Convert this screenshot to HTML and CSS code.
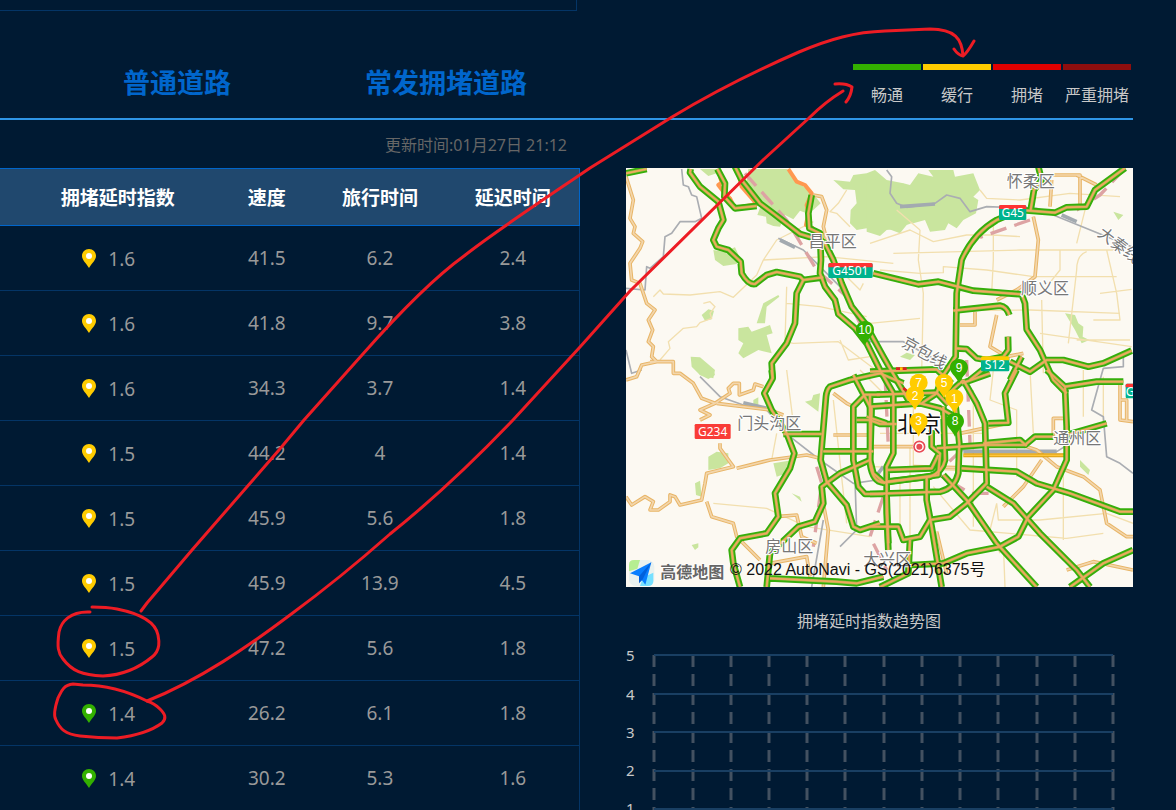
FILE: index.html
```
<!DOCTYPE html>
<html lang="zh-CN">
<head>
<meta charset="utf-8">
<title>北京交通拥堵指数</title>
<link rel="stylesheet" href="styles.css">
</head>
<body>
<svg class="sprite" aria-hidden="true">
  <symbol id="pin" viewBox="0 0 14 19">
    <path d="M7 0C3 0 0 3 0 7C0 11 4 14 7 19C10 14 14 11 14 7C14 3 11 0 7 0Z" fill="currentColor"/>
    <circle cx="7" cy="7" r="3" fill="#fff"/>
  </symbol>
  <symbol id="marker" viewBox="0 0 58 76">
    <path d="M29 1C13 1 2 12 2 27C2 43 17 49 29 73C41 49 56 43 56 27C56 12 45 1 29 1Z" fill="currentColor"/>
  </symbol>
</svg>
<main class="page">
  <div class="upper-box"></div>
  <header class="bar">
    <nav class="tabs">
      <button class="tab" type="button">普通道路</button>
      <button class="tab" type="button">常发拥堵道路</button>
    </nav>
    <ul class="legend">
      <li class="free">畅通</li>
      <li class="slow">缓行</li>
      <li class="jam">拥堵</li>
      <li class="severe">严重拥堵</li>
    </ul>
  </header>
  <div class="content">
    <section class="roads">
      <p class="updated">更新时间:01月27日 21:12</p>
      <table class="road-table">
        <thead>
          <tr><th class="index">拥堵延时指数</th><th class="speed">速度</th><th>旅行时间</th><th>延迟时间</th></tr>
        </thead>
        <tbody>
          <tr><td class="index"><span class="level slow-pin"><svg class="pin"><use href="#pin"/></svg>1.6</span></td><td>41.5</td><td>6.2</td><td>2.4</td></tr>
          <tr><td class="index"><span class="level slow-pin"><svg class="pin"><use href="#pin"/></svg>1.6</span></td><td>41.8</td><td>9.7</td><td>3.8</td></tr>
          <tr><td class="index"><span class="level slow-pin"><svg class="pin"><use href="#pin"/></svg>1.6</span></td><td>34.3</td><td>3.7</td><td>1.4</td></tr>
          <tr><td class="index"><span class="level slow-pin"><svg class="pin"><use href="#pin"/></svg>1.5</span></td><td>44.2</td><td>4</td><td>1.4</td></tr>
          <tr><td class="index"><span class="level slow-pin"><svg class="pin"><use href="#pin"/></svg>1.5</span></td><td>45.9</td><td>5.6</td><td>1.8</td></tr>
          <tr><td class="index"><span class="level slow-pin"><svg class="pin"><use href="#pin"/></svg>1.5</span></td><td>45.9</td><td>13.9</td><td>4.5</td></tr>
          <tr><td class="index"><span class="level slow-pin"><svg class="pin"><use href="#pin"/></svg>1.5</span></td><td>47.2</td><td>5.6</td><td>1.8</td></tr>
          <tr><td class="index"><span class="level free-pin"><svg class="pin"><use href="#pin"/></svg>1.4</span></td><td>26.2</td><td>6.1</td><td>1.8</td></tr>
          <tr><td class="index"><span class="level free-pin"><svg class="pin"><use href="#pin"/></svg>1.4</span></td><td>30.2</td><td>5.3</td><td>1.6</td></tr>
        </tbody>
      </table>
    </section>
    <section class="side">
      <svg class="map" viewBox="18 24 1521 1257" role="img" aria-label="北京路况地图">
        <defs>
          <g id="ring-roads">
            <path d="M18 40L80 27M212 27L210 38L240 80L295 125L310 180L295 205L280 240L290 260L325 270L362 305L365 340Q385 375 405 372L440 345L470 336L540 350L550 360L610 352"/>
            <path d="M550 360L530 400L525 490L500 550L455 610L458 655"/>
            <path d="M292 27L315 70L313 110L345 145L410 138M345 20L365 60L420 130L460 160L540 222L600 240L615 250L640 300L665 370L695 440L735 490L790 590L830 660L865 720"/>
            <path d="M575 105L565 160L568 205L600 220L603 300L600 340L615 380L645 420L655 462L705 505L740 550L780 630L820 700"/>
            <path d="M760 340L895 373L955 365L1060 392L1205 403L1215 430L1220 508L1260 570L1300 660L1340 700"/>
            <path d="M1515 24L1425 90L1400 140L1340 142L1305 158L1200 150L1130 180Q1060 220 1025 300L1010 400L1007 590L960 660"/>
            <path d="M1232 150L1242 90L1265 60L1255 20M1000 452L1140 437Q1160 440 1168 465M1164 530L1165 570L1150 590L1100 600M1005 565L1040 567L1070 595L1100 600"/>
            <path d="M1170 605L1230 635L1280 600L1330 600L1405 620L1450 610L1535 572M1050 660L1100 620M1170 660L1205 590"/>
            <path d="M455 630L458 655L433 700L455 750L500 820L523 880L510 925L465 1000L475 1070L440 1120L360 1135L335 1170L340 1210L360 1281"/>
            <path d="M440 1281L450 1180L535 1100L585 1085L610 1030L605 980L660 940L750 900M490 822L605 822M610 874L760 874M450 1255L650 1265L710 1270L790 1250"/>
            <path d="M780 640L690 660L630 680Q620 690 618 710L602 900L620 965L680 1035L700 1100L720 1110L780 1090"/>
            <path d="M780 704L735 704L700 740L700 900L715 980L735 1002L790 1002M700 645L750 740L750 900L760 940L795 970"/>
            <path d="M750 635L950 628L995 670M770 704L950 698L985 735M750 704L750 740L900 730L960 745L995 765M740 770L800 790"/>
            <path d="M755 740L750 910Q757 965 790 968L955 945L960 880L935 860L935 810M710 780L750 780L780 792L830 792M820 704L820 880L800 920L800 1060L805 1170M800 930L935 925L955 885"/>
            <path d="M970 740L975 900Q968 935 930 950L800 965M1005 720L1018 850L1015 940Q1005 985 960 995L750 1002"/>
            <path d="M780 640L850 670M905 730L950 700L970 640"/>
            <path d="M1030 660L1070 730L1095 790L1100 970L1040 1030L990 1070L930 1080L900 1130L850 1140L835 1100L750 1100M1030 660L980 705M1025 670L1110 640"/>
            <path d="M950 865L1090 855L1215 855L1245 830L1300 830M1105 790L1165 788L1155 700L1190 630M1090 850L1200 840L1220 858"/>
            <path d="M1025 925L1190 935L1250 970L1350 1000L1500 1055L1539 1055M1100 980L1180 1030L1260 1120L1370 1230L1410 1281"/>
            <path d="M1280 630L1335 680L1340 800L1340 900L1300 990L1225 1070L1195 1130L1140 1160L1040 1180L970 1210L875 1215M1335 680L1430 665L1510 665M1340 825L1460 790"/>
            <path d="M970 945L1040 1020L1130 1150L1250 1281M920 950L920 1020L935 1100L965 1281M870 1140L865 1240L780 1281M800 1010L805 1150M1350 1281L1450 1210L1539 1170"/>
          </g>
          <g id="country-roads">
            <path d="M18 50L40 120L30 175L45 200L40 220L68 245L60 265L30 310L35 360L60 370L70 400L80 430L105 450L85 480L98 510L85 545L100 560L95 590L110 605L65 615L50 650L18 660M90 605H160V640H180L220 670L245 715L285 730L240 750L270 765L240 780M285 730L330 700L325 685L340 670H358V705L400 690L405 672L430 680M290 730L450 750L490 765M300 850L300 865L340 920L260 940L255 970L245 1020L180 1035L165 1010L150 1005V1025L115 1050H90L100 1025L75 1010L35 1035L18 1010M260 1025L275 1070L340 1090L350 1130L420 1200M350 925L450 900L560 885L600 895M470 1070L530 1065L545 1130L590 1150M600 980L625 1110L610 1281M450 1210L560 1190L570 1250"/>
            <path d="M580 105L605 110L620 150L610 200L620 240M1240 170L1255 240L1245 350L1190 390L1130 420M1130 465L1110 560L1160 590L1210 580M1300 45H1380V140M1295 60L1290 140M1370 45L1430 75M1020 495H1065V455M1300 830V775H1340M1500 660V780L1539 785M1500 720H1520V785M1190 850L1250 870L1310 920L1390 950L1440 990L1460 1090L1520 1130H1539M1265 900L1210 980L1150 1040M1340 1230L1420 1205L1539 1230M880 920L1100 925M750 860H890M1020 820L1160 790M950 1115L980 1240M640 825H760M640 700L680 730L700 740"/>
          </g>
        </defs>
        <rect x="18" y="24" width="1521" height="1257" fill="#fcf9f2"/>
        <g class="parks">
          <path d="M385 27H500L530 65L575 95L602 130L580 150L560 160L540 152L520 178L495 165L480 200L460 198L440 190L438 170L412 165L425 130L400 95L378 75ZM240 27H290V40L265 48ZM640 60L690 65L700 45L740 40L765 30L800 60L850 70L860 100L890 110L900 180L860 195L840 220L800 205L780 220L740 205L710 210L690 190L692 150L710 130L705 90L670 88Z"/>
          <path d="M740 60L790 55L825 90L850 70L870 75L895 40L940 50L925 30L1000 30L1005 50L1060 40L1080 90L1060 110L1075 120L1068 160L1030 180L1010 205L985 190L975 210L930 215L915 180L880 190L870 170L845 205L800 210L780 228L740 215ZM280 270L310 275L345 262L358 290L350 312L310 318L285 300ZM430 430L475 405L478 410L440 440L435 490L410 490ZM355 505L385 500L395 515L450 495L458 520L440 525L455 580L415 570L370 595L355 580L370 550L355 540ZM212 590L240 592L285 630L280 655L240 645L215 620ZM245 465L265 448L282 452L275 478L255 482Z"/>
          <path d="M230 630H280L285 645L265 657L240 645ZM555 725L575 720L580 705L600 700L595 755L575 740ZM265 890L290 875L325 880V910L300 925L265 930ZM460 910L520 900L500 940L470 950ZM225 970L240 962L245 1010L228 1005ZM515 1000L540 1010L545 1025ZM1335 460L1365 465L1375 490L1390 500L1388 530L1408 540L1385 550L1365 510ZM1480 155L1510 165L1495 180ZM840 590L860 578L885 585L870 600ZM1380 900L1410 930L1405 945L1380 920ZM215 1155L235 1150L235 1162L225 1170ZM400 720L415 712V735L400 740Z"/>
        </g>
        <g class="lanes">
          <path d="M100 410L120 390L130 402L210 405L300 395L340 412L410 345L430 300L470 240L580 185M500 380L495 545L520 550L655 545L780 640M500 430L600 440L740 470M430 300L620 290L820 310M120 600L150 565L145 545L190 505L230 500L240 488L275 475L270 460L285 440L270 425L250 430M660 540L685 600L750 590M720 630L790 700M630 300L720 390L730 370M680 90L655 130L630 155L650 160L690 200"/>
          <path d="M750 250L870 210L940 245L1040 225L1120 225L1200 230M820 280L1020 275L1200 270L1500 270M780 330L900 340L970 338L970 320L1100 330L1240 350L1490 350M750 490L900 475M1020 452L1230 450L1500 460M900 210L895 300L910 400L905 640M1120 190V300L1115 400M1400 275Q1370 285 1370 330L1345 550M1440 400L1535 388M1400 130L1370 250M1370 540H1530M1460 270L1490 400L1500 480H1420M1320 270V330L1280 380M830 150L900 210M1080 90L1100 115L1200 120L1350 100L1500 110M1260 520L1535 560M1265 420L1270 640"/>
          <path d="M470 820L455 900M280 1030L440 1045L560 1100L750 1130M500 630L520 790M640 720L680 1090M1120 630L1110 720L1190 750L1190 950M1230 630L1240 820M1330 920V1140M1130 1030L1135 1080L1260 1080L1460 1060L1539 1090M1130 1030L1110 1110L1140 1180M940 980L1050 1110L1340 1135L1450 1120M1150 1150L1155 1281M840 960V1100M760 920L1200 940M870 860V1200M1390 630V770M1450 650V800M780 820H1100M1060 690V1100M880 650V930"/>
        </g>
        <g class="rails">
          <path d="M185 27L190 75L205 80L215 105L230 110L245 175L225 185H180L155 220L135 230L130 290L90 325L80 320L75 390L18 385M475 235L550 270L660 380L730 500L750 545L800 545M18 570L35 640L65 630M240 650L300 710L370 735L440 750L510 830L600 900L700 970L770 960M705 960L710 1110L660 1160M610 1080L575 1281M800 30L815 50L810 100L830 130L860 142L945 130L980 105L1020 115L1050 155L1100 140L1250 145L1535 260M1020 870L1110 875L1310 875L1350 850M1510 590V620L1450 625L1440 660L1415 750L1450 770L1460 890L1500 910L1539 940M770 545H850L985 620"/>
        </g>
        <g class="rails-wide"><path d="M370 728L440 745M480 240L525 262M840 140L945 132M1325 165L1370 185M1030 874H1310M790 920L760 960"/></g>
        <g class="red-rails">
          <path d="M375 40L500 180L590 330L680 410L720 490M1510 30L1440 105L1370 150M1230 180L1080 232M795 645L805 860M1025 870L950 940L1050 1000L1130 1000M590 920L605 970L580 1160M790 1010L750 1130L800 1230M1040 600L1050 850"/>
        </g>
        <use href="#country-roads" class="country-case"/><use href="#country-roads" class="country-core"/>
        <path class="slow-road" d="M505 27L530 65L555 75L575 100L560 135L565 160L558 195L580 205M300 50L305 68L295 75L310 95L330 115L345 145L410 132L365 80L355 40L345 27"/>
        <path d="M1030 886H1335" stroke="#d99d12" stroke-width="12"/><path d="M1030 886H1335" stroke="#ffc53b" stroke-width="5"/>
        <use href="#ring-roads" class="road-case"/><use href="#ring-roads" class="road-edge"/><use href="#ring-roads" class="road-core"/>
        <path d="M828 626H860M850 684L860 692" stroke="#e02020" stroke-width="8"/>
        <path d="M840 626H848" stroke="#ffcc00" stroke-width="8"/>
        <g class="places">
          <text x="566" y="262">昌平区</text><text x="1160" y="80">怀柔区</text><text x="1203" y="402">顺义区</text>
          <text x="352" y="808">门头沟区</text><text x="1300" y="851">通州区</text><text x="436" y="1176">房山区</text><text x="730" y="1216">大兴区</text>
          <text transform="translate(1430 226) rotate(37)">大秦线</text><text transform="translate(842 558) rotate(29)">京包线</text>
        </g>
        <g class="shields">
          <rect x="625" y="310" width="133" height="44" rx="4" fill="#00b38d"/><path d="M625 322V314Q625 309 630 309H753Q758 309 758 314V322Z" fill="#f33"/><text x="691" y="346">G4501</text>
          <rect x="1137" y="136" width="82" height="44" rx="4" fill="#00b38d"/><path d="M1137 147V140Q1137 135 1142 135H1214Q1219 135 1219 140V147Z" fill="#f33"/><text x="1178" y="172">G45</text>
          <rect x="1083" y="590" width="85" height="44" rx="4" fill="#00b38d"/><path d="M1083 601V594Q1083 589 1088 589H1163Q1168 589 1168 594V601Z" fill="#fc0"/><text x="1125" y="627">S12</text>
          <rect x="224" y="792" width="108" height="45" rx="4" fill="#f93c37"/><text x="278" y="829">G234</text>
          <rect x="1517" y="671" width="40" height="44" rx="4" fill="#00b38d"/><path d="M1517 682V676Q1517 671 1522 671H1539V682Z" fill="#f33"/><text x="1541" y="709">G1</text>
        </g>
        <text class="capital" x="832" y="816">北京</text>
        <g class="markers">
          <g class="free-pin"><use href="#marker" x="706" y="482" width="58" height="76"/><use href="#marker" x="988" y="596" width="58" height="76"/><use href="#marker" x="976" y="757" width="58" height="76"/></g>
          <g class="slow-pin"><use href="#marker" x="856" y="677" width="58" height="76"/><use href="#marker" x="943" y="641" width="58" height="76"/><use href="#marker" x="974" y="687" width="58" height="76"/><use href="#marker" x="867" y="757" width="58" height="76"/></g>
          <text x="735" y="523">10</text><text x="1017" y="636">9</text><text x="1005" y="796">8</text><text x="885" y="720">2</text><text x="972" y="680">5</text><text x="1003" y="729">1</text><text x="896" y="796">3</text>
          <g class="slow-pin"><use href="#marker" x="867" y="641" width="58" height="58"/><circle cx="896" cy="668" r="27" fill="currentColor"/></g><text x="896" y="681">7</text>
        </g>
        <circle cx="898" cy="860" r="20" fill="#fff"/><circle cx="898" cy="860" r="16" fill="#fff" stroke="#e84c55" stroke-width="5"/><circle cx="898" cy="860" r="9" fill="#e84c55"/>
        <rect x="27" y="1200" width="76" height="78" rx="20" fill="#e9f1ef"/>
        <path d="M27 1234V1214Q27 1200 42 1200H60L52 1226Z" fill="#b6ee91"/><path d="M70 1252L100 1238V1262Q100 1278 84 1278H60Z" fill="#76e0ff"/>
        <path d="M94 1207L30 1240L57 1249L76 1274Z" fill="#087eff"/><path d="M94 1207L57 1249V1270L67 1260Z" fill="#0060dc"/>
        <text class="brand" x="121" y="1255">高德地图</text>
        <text class="rights" x="330" y="1244">© 2022 AutoNavi - GS(2021)6375号</text>
      </svg>
      <h2 class="chart-title">拥堵延时指数趋势图</h2>
      <svg class="chart" viewBox="0 0 507 200" role="img" aria-label="拥堵延时指数趋势图">
        <path class="v-lines" d="M28 14V200M67 14V200M105 14V200M143 14V200M181 14V200M219 14V200M258 14V200M296 14V200M334 14V200M372 14V200M411 14V200M449 14V200M487 14V200"/>
        <path class="h-lines" d="M28 14H487M28 53H487M28 91H487M28 130H487M28 168H487"/>
        <g class="ticks"><text x="0" y="20">5</text><text x="0" y="59">4</text><text x="0" y="97">3</text><text x="0" y="135">2</text><text x="0" y="173">1</text></g>
      </svg>
    </section>
  </div>
  <svg class="notes" viewBox="0 0 1176 810" aria-hidden="true">
    <path d="M90 612C70 611 61 622 59 632C57 647 58 653 63 659C72 671 82 675 103 676C124 675 140 667 152 657C161 650 159 640 158 635C155 620 137 613 117 609C107 607 100 607 92 607"/>
    <path d="M147 701C133 694 110 685 83 685L73 684C63 685 61 692 58 698C54 710 54 717 56 720C60 729 65 734 80 736Q98 738 117 738C133 736 150 732 162 723C167 718 165 714 160 709C155 704 150 702 147 701"/>
    <path d="M141 611L147 603L192 550L279 450L304 420L362 355C400 312 435 277 464 256C490 235 540 202 590 168L672 117C720 88 760 69 799 52C830 39 855 32 885 31L930 29C955 29 962 39 963 56M954 49Q958 55 963 56Q967 53 974 41"/>
    <path d="M147 701C200 680 250 645 290 615C324 590 355 565 390 534C430 502 470 465 513 420L580 347L630 291L763 160L809 118Q825 102 843 91M835 84Q846 83 852 87Q851 96 846 102"/>
  </svg>
</main>
</body>
</html>
```
FILE: styles.css
```
* { box-sizing: border-box; }
html, body { height: 100%; margin: 0; overflow: hidden; }
body { background: #001a33; font-family: "Noto Sans", "Noto Sans CJK SC", sans-serif; color: #c8c8c8; }
.sprite { position: absolute; width: 0; height: 0; }
.page { position: relative; }
.upper-box { width: 49.1%; height: 11px; border: solid #043566; border-width: 0 1px 1px 0; }
.bar { display: flex; justify-content: space-between; align-items: flex-end; height: 109px; margin-right: 43px; border-bottom: 2px solid #2f95e6; }
.tabs { display: flex; gap: 134px; padding: 0 0 16px 123px; }
.tab { padding: 0; border: 0; background: none; color: #0066cc; font: bold 27px/40px "Noto Sans CJK SC", sans-serif; cursor: pointer; }
.legend { display: grid; grid-template-columns: repeat(4, 1fr); gap: 2px; width: 280px; margin: 0; padding: 0 2px 11px 0; list-style: none; font-size: 16px; line-height: 24px; text-align: center; white-space: nowrap; }
.legend li { padding-top: 13px; border-top: 6px solid; border-top-color: var(--level); }
.free { --level: #33b000; }
.slow { --level: #ffcc00; }
.jam { --level: #e00000; }
.severe { --level: #8e0e0e; }
.content { display: grid; grid-template-columns: 580fr 507fr; column-gap: 46px; margin-right: 43px; }
.updated { margin: 0; padding: 0 13px 0 0; height: 48px; line-height: 50px; font-size: 16px; text-align: right; color: #666; }
.road-table { width: 100%; border-collapse: separate; border-spacing: 0; table-layout: fixed; font-size: 19px; text-align: center; }
.road-table th { height: 58px; padding: 0; background: #20486e; border: solid #0066cc; border-width: 1px 0; color: #fff; font: bold 19px/28px "Noto Sans CJK SC", sans-serif; white-space: nowrap; }
.road-table td { height: 65px; padding: 0; border-bottom: 1px solid #043566; color: #999; }
.road-table th:last-child { border-right-width: 1px; }
.road-table td:last-child { border-right: 1px solid #043566; }
.road-table .index { width: 38%; padding-left: 15px; }
.road-table td.index { padding-right: 18px; }
.road-table .speed { width: 16%; }
.level { display: inline-flex; align-items: center; gap: 12px; vertical-align: middle; }
.pin { width: 14px; height: 19px; }
.slow-pin .pin, .markers .slow-pin { color: #ffcc00; }
.free-pin .pin, .markers .free-pin { color: #33b000; }
.side { padding-top: 48px; }
.map { display: block; width: 100%; }
.map path, .map use { stroke-linejoin: round; }
.parks { fill: #c9e59e; }
.lanes { fill: none; stroke: #f2dfae; stroke-width: 4; }
.rails { fill: none; stroke: #aaadb2; stroke-width: 5; }
.rails-wide { fill: none; stroke: #a3aab0; stroke-width: 11; }
.red-rails { fill: none; stroke: #dda3a3; stroke-width: 10; stroke-dasharray: 50 25; }
.country-case, .country-core, .road-case, .road-edge, .road-core, .slow-road { fill: none; }
.country-case { stroke: #e8b566; stroke-width: 11; }
.country-core { stroke: #f3d6ac; stroke-width: 5; }
.slow-road { stroke: #ff9850; stroke-width: 12; }
.road-case { stroke: #35ae0a; stroke-width: 20; }
.road-edge { stroke: #a9b548; stroke-width: 9; }
.road-core { stroke: #f0a860; stroke-width: 5; }
.places { font: 48px "Noto Sans CJK SC", sans-serif; fill: #777; stroke: #fff; stroke-width: 6; paint-order: stroke; }
.shields { font: 36px "Noto Sans", sans-serif; fill: #fff; text-anchor: middle; }
.capital { font: 66px "Noto Sans CJK SC", sans-serif; fill: #111; stroke: #fff; stroke-width: 6; paint-order: stroke; }
.markers { font: 36px "Liberation Sans", sans-serif; text-anchor: middle; }
.markers text { fill: #fff; }
.brand { font: bold 48px "Noto Sans CJK SC", sans-serif; fill: #666; stroke: #fff; stroke-width: 4; paint-order: stroke; }
.rights { font: 48px "Liberation Sans", "Noto Sans CJK SC", sans-serif; fill: #111; }
.chart-title { margin: 22px 21px 0 0; font-size: 16px; line-height: 24px; font-weight: normal; text-align: center; }
.chart { display: block; width: 100%; margin-top: 8px; }
.h-lines { stroke: #193f63; stroke-width: 2; }
.v-lines { stroke: #435161; stroke-width: 3; stroke-dasharray: 12 7; }
.ticks { font-size: 15px; fill: #c8c8c8; }
.notes { position: absolute; top: 0; left: 0; width: 100%; pointer-events: none; fill: none; stroke: #ed1c24; stroke-width: 3; stroke-linecap: round; stroke-linejoin: round; }
```
